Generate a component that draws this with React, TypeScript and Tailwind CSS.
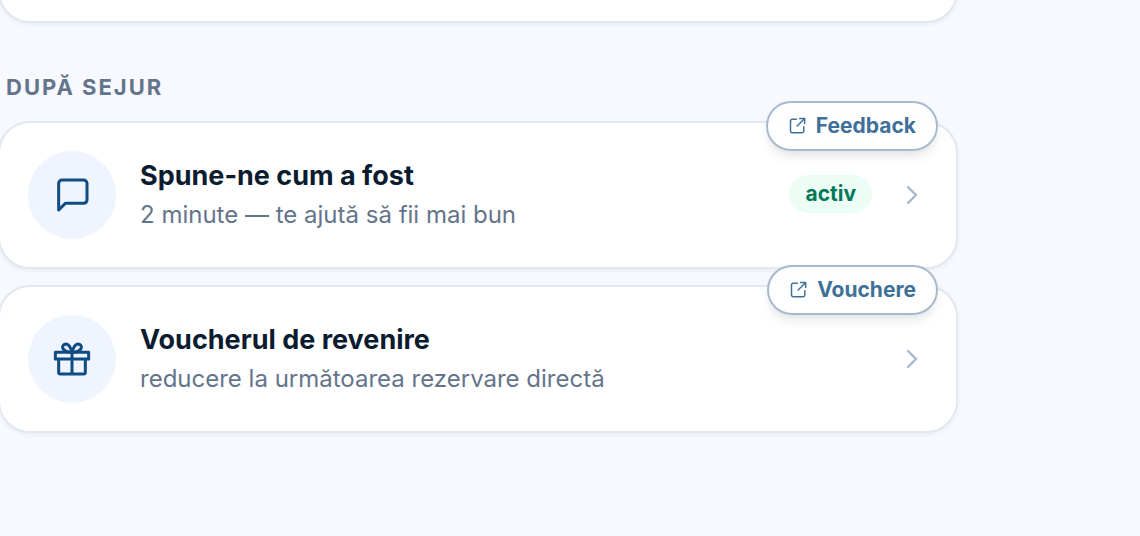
import type { ReactNode } from 'react';

interface CardProps {
  title: string;
  description: string;
  tag: string;
  status?: string;
  icon: ReactNode;
}

const MessageIcon = () => (
  <svg
    className="size-10"
    viewBox="0 0 24 24"
    fill="none"
    stroke="currentColor"
    strokeWidth="1.8"
    strokeLinecap="round"
    strokeLinejoin="round"
    aria-hidden="true"
  >
    <path d="M21 15a2 2 0 0 1-2 2H8l-4 4V5a2 2 0 0 1 2-2h13a2 2 0 0 1 2 2z" />
  </svg>
);

const GiftIcon = () => (
  <svg
    className="size-10"
    viewBox="0 0 24 24"
    fill="none"
    stroke="currentColor"
    strokeWidth="1.8"
    strokeLinecap="round"
    strokeLinejoin="round"
    aria-hidden="true"
  >
    <path d="M2 8h20v4H2zM20 12v8a1 1 0 0 1-1 1H5a1 1 0 0 1-1-1v-8M12 8v13" />
    <path d="M12 8C11.2 5 10 3 8.2 3A1.9 1.9 0 0 0 6.4 5C6.4 6.8 9 8 12 8zM12 8c.8-3 2-5 3.8-5A1.9 1.9 0 0 1 17.6 5C17.6 6.8 15 8 12 8z" />
  </svg>
);

const ExternalIcon = () => (
  <svg
    className="size-5"
    viewBox="0 0 24 24"
    fill="none"
    stroke="currentColor"
    strokeWidth="1.8"
    strokeLinecap="round"
    strokeLinejoin="round"
    aria-hidden="true"
  >
    <path d="M14 3h6v6M20 3l-9 9M19 13v5a2 2 0 0 1-2 2H5a2 2 0 0 1-2-2V6a2 2 0 0 1 2-2h5" />
  </svg>
);

const ChevronIcon = () => (
  <svg
    className="size-8 text-[#a9b8cc]"
    viewBox="0 0 24 24"
    fill="none"
    stroke="currentColor"
    strokeWidth="1.8"
    strokeLinecap="round"
    strokeLinejoin="round"
    aria-hidden="true"
  >
    <path d="m9 18 6-6-6-6" />
  </svg>
);

const StayCard = ({ title, description, tag, status, icon }: CardProps) => (
  <li className="relative">
    <button
      type="button"
      className="flex w-full items-center gap-6 rounded-4xl border-2 border-[#e2e8f0] bg-white p-7 text-left shadow-[0_2px_4px_rgba(15,23,42,0.05)]"
    >
      <span className="flex size-22 shrink-0 items-center justify-center rounded-full bg-[#eff4ff] text-[#0f4c81]">
        {icon}
      </span>
      <span className="flex grow flex-col gap-0.5">
        <span className="text-[27px] leading-[38px] font-bold text-[#0b1c30]">{title}</span>
        <span className="text-2xl leading-9 text-[#64748b]">{description}</span>
      </span>
      {status && (
        <span className="mb-0.5 rounded-full bg-[#ecfdf5] px-4 py-[5px] text-[21px] leading-7 font-bold text-[#047857]">
          {status}
        </span>
      )}
      <ChevronIcon />
    </button>
    <a
      href="#"
      className="absolute -top-5 right-5 flex h-[50px] items-center gap-2 rounded-full border-2 border-[#a7bacd] bg-white/90 px-5 text-[21px] leading-7 font-bold text-[#3f709a] shadow-[0_8px_12px_-2px_rgba(15,23,42,0.08),0_4px_8px_-4px_rgba(15,23,42,0.08)]"
    >
      <ExternalIcon />
      {tag}
    </a>
  </li>
);

const App = () => {
  return (
    <main className="flex min-h-screen flex-col overflow-hidden bg-[#f8f9ff] pr-[182px] font-['Inter',sans-serif]">
      <div className="-mt-[57px] -ml-0.5">
        <div className="h-20 rounded-4xl border-2 border-[#e2e8f0] bg-white shadow-[0_2px_4px_rgba(15,23,42,0.05)]"></div>
        <h2 className="mt-12 px-2 text-[22px] leading-8 font-bold tracking-[2px] text-[#64748b] uppercase">
          După sejur
        </h2>
        <ul className="mt-[18px] flex flex-col gap-4">
          <StayCard
            title="Spune-ne cum a fost"
            description="2 minute — te ajută să fii mai bun"
            tag="Feedback"
            status="activ"
            icon={<MessageIcon />}
          />
          <StayCard
            title="Voucherul de revenire"
            description="reducere la următoarea rezervare directă"
            tag="Vouchere"
            icon={<GiftIcon />}
          />
        </ul>
      </div>
    </main>
  );
};

export default App;
